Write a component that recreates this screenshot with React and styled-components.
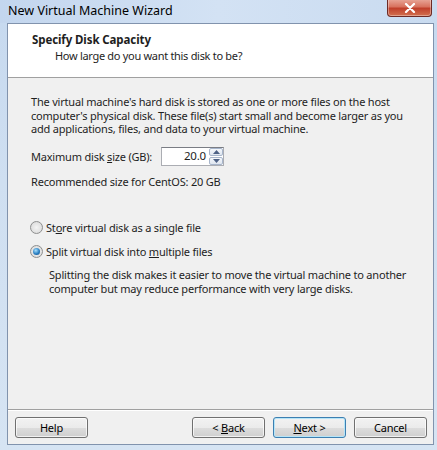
import { createGlobalStyle, styled } from "styled-components";

const GlobalStyle = createGlobalStyle`
	html, body {
		margin: 0;
		padding: 0;
		background: #c9dbef;
	}
	body {
		font-family: "Noto Sans", "Open Sans", sans-serif;
		font-size: 11px;
		letter-spacing: -0.2px;
		color: #1e1e1e;
	}
`;

const RadioOption = ({ checked, children }) => (
	<RadioRow>
		<RadioDot $checked={checked} />
		<span>{children}</span>
	</RadioRow>
);

const App = () => {
	return (
		<Window>
			<GlobalStyle />
			<TitleBar>
				<Caption>New Virtual Machine Wizard</Caption>
				<CloseButton>
					<svg width="12" height="10" viewBox="0 0 12 10">
						<path
							d="M2 1 L10 9 M10 1 L2 9"
							stroke="#fff"
							strokeWidth="2.2"
							strokeLinecap="round"
						/>
					</svg>
				</CloseButton>
			</TitleBar>
			<Client>
				<Header>
					<HeaderTitle>Specify Disk Capacity</HeaderTitle>
					<HeaderSubtitle>How large do you want this disk to be?</HeaderSubtitle>
				</Header>
				<Body>
					<Paragraph>
						<Line>The virtual machine's hard disk is stored as one or more files on the host</Line>
						<Line>computer's physical disk. These file(s) start small and become larger as you</Line>
						<Line>add applications, files, and data to your virtual machine.</Line>
					</Paragraph>
					<SizeRow>
						<SizeLabel>
							Maximum disk <u>s</u>ize (GB):
						</SizeLabel>
						<SpinBox>
							<SpinValue>20.0</SpinValue>
							<SpinArrows>
								<SpinArrow>
									<svg width="7" height="4" viewBox="0 0 7 4">
										<path d="M0 4 L3.5 0 L7 4 Z" fill="#4d6185" />
									</svg>
								</SpinArrow>
								<SpinArrow>
									<svg width="7" height="4" viewBox="0 0 7 4">
										<path d="M0 0 L3.5 4 L7 0 Z" fill="#4d6185" />
									</svg>
								</SpinArrow>
							</SpinArrows>
						</SpinBox>
					</SizeRow>
					<Recommended>Recommended size for CentOS: 20 GB</Recommended>
					<Options>
						<RadioOption>
							St<u>o</u>re virtual disk as a single file
						</RadioOption>
						<RadioOption checked>
							Split virtual disk into <u>m</u>ultiple files
						</RadioOption>
					</Options>
					<Note>
						<Line>Splitting the disk makes it easier to move the virtual machine to another</Line>
						<Line>computer but may reduce performance with very large disks.</Line>
					</Note>
				</Body>
				<Footer>
					<Button>
						<span>Help</span>
					</Button>
					<Spacer />
					<Button>
						<span>
							&lt; <u>B</u>ack
						</span>
					</Button>
					<Button $default>
						<span>
							<u>N</u>ext &gt;
						</span>
					</Button>
					<Button>
						<span>Cancel</span>
					</Button>
				</Footer>
			</Client>
		</Window>
	);
};

const Window = styled.div`
	width: 437px;
	height: 450px;
	display: flex;
	flex-direction: column;
	background: linear-gradient(180deg, #c6d9ef 0%, #cfdff1 40%, #d6e4f3 100%);
	overflow: hidden;
`;

const TitleBar = styled.div`
	height: 23px;
	display: flex;
	align-items: flex-start;
	padding-left: 8px;
	padding-right: 5px;
	flex-shrink: 0;
	background: linear-gradient(90deg, #c3d6ee 0%, #d3e2f4 50%, #c9dbf0 100%);
`;

const Caption = styled.div`
	font-size: 12.5px;
	letter-spacing: 0;
	line-height: 13px;
	margin-top: 4px;
	color: #000;
`;

const CloseButton = styled.div`
	margin-left: auto;
	width: 43px;
	height: 17px;
	margin-top: -1px;
	border: 1px solid #6d2a25;
	border-top: none;
	border-radius: 0 0 4px 4px;
	background: linear-gradient(180deg, #e9a99b 0%, #d8735f 45%, #c0402b 55%, #d2704f 100%);
	display: flex;
	align-items: center;
	justify-content: center;
	box-shadow: inset 0 0 0 1px rgba(255, 255, 255, 0.35);
`;

const Client = styled.div`
	flex: 1;
	margin: 0 3px 5px 7px;
	border: 1px solid #8193ad;
	background: #f0f0f0;
	display: flex;
	flex-direction: column;
`;

const Header = styled.div`
	height: 54px;
	background: #fff;
	border-bottom: 1px solid #a0a0a0;
	padding: 9px 0 0 24px;
	box-sizing: border-box;
`;

const HeaderTitle = styled.div`
	font-weight: bold;
	font-size: 11.5px;
	letter-spacing: -0.1px;
	line-height: 14px;
`;

const HeaderSubtitle = styled.div`
	padding-left: 23px;
	margin-top: 2px;
	line-height: 14px;
	letter-spacing: -0.3px;
`;

const Body = styled.div`
	flex: 1;
	padding: 17px 10px 0 23px;
	display: flex;
	flex-direction: column;
`;

const Paragraph = styled.div`
	display: flex;
	flex-direction: column;
`;

const Line = styled.div`
	height: 13.5px;
	line-height: 13.5px;
	white-space: nowrap;
`;

const SizeRow = styled.div`
	display: flex;
	align-items: center;
	margin-top: 11px;
`;

const SizeLabel = styled.span`
	width: 130px;
`;

const SpinBox = styled.div`
	width: 63px;
	height: 19px;
	border: 1px solid #abadb3;
	border-top-color: #7a7d84;
	background: #fff;
	display: flex;
	align-items: center;
	box-sizing: border-box;
`;

const SpinValue = styled.div`
	flex: 1;
	text-align: right;
	padding-right: 3px;
	font-size: 11.5px;
	line-height: 14px;
`;

const SpinArrows = styled.div`
	width: 14px;
	height: 17px;
	display: flex;
	flex-direction: column;
	gap: 1px;
`;

const SpinArrow = styled.div`
	flex: 1;
	display: flex;
	align-items: center;
	justify-content: center;
	border: 1px solid #a7b5cb;
	border-radius: 2px;
	background: linear-gradient(180deg, #f4f7fb 0%, #dfe6f0 100%);
`;

const Recommended = styled.div`
	margin-top: 9px;
	line-height: 14px;
`;

const Options = styled.div`
	margin-top: 32px;
	display: flex;
	flex-direction: column;
	gap: 10px;
`;

const RadioRow = styled.div`
	display: flex;
	align-items: center;
	gap: 3px;
	margin-left: -1px;
	line-height: 14px;
`;

const RadioDot = styled.span`
	width: 11px;
	height: 11px;
	border-radius: 50%;
	border: 1px solid #8e8f8f;
	background: radial-gradient(circle, #f4f4f4 0%, #d6d6d6 100%);
	position: relative;
	flex-shrink: 0;

	&::after {
		content: "";
		display: ${(p) => (p.$checked ? "block" : "none")};
		position: absolute;
		left: 2px;
		top: 2px;
		width: 7px;
		height: 7px;
		border-radius: 50%;
		background: radial-gradient(circle at 40% 35%, #a8e1ff 0%, #2a7fc2 55%, #0f4a86 100%);
	}
`;

const Note = styled.div`
	margin: 9px 0 0 18px;
	display: flex;
	flex-direction: column;

	& > div {
		height: 14px;
		line-height: 14px;
	}
`;

const Footer = styled.div`
	height: 34px;
	border-top: 1px solid #a0a0a0;
	box-shadow: inset 0 1px 0 #fff;
	display: flex;
	align-items: center;
	gap: 8px;
	padding: 0 6px 0 7px;
`;

const Spacer = styled.div`
	flex: 1;
`;

const Button = styled.div`
	width: 73px;
	height: 21px;
	box-sizing: border-box;
	border: 1px solid ${(p) => (p.$default ? "#3c7fb1" : "#707070")};
	border-radius: 3px;
	background: linear-gradient(180deg, #f2f2f2 0%, #ebebeb 50%, #dddddd 51%, #cfcfcf 100%);
	box-shadow: ${(p) =>
		p.$default ? "inset 0 0 0 1px #b6e5f8" : "inset 0 0 0 1px rgba(255,255,255,0.7)"};
	display: flex;
	align-items: center;
	justify-content: center;
	color: #000;
	white-space: pre;
`;

export default App;
